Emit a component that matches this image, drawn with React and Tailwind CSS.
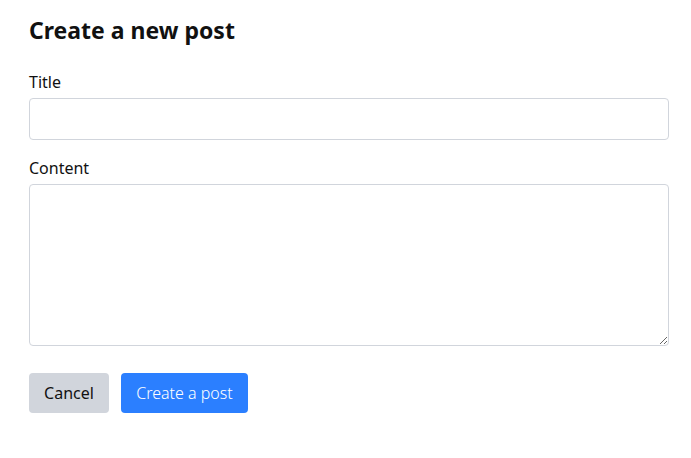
export default function App() {
  return (
    <div className="min-h-screen bg-white px-[29px] pt-[14px] font-['Noto_Sans','Open_Sans',sans-serif] text-[#111]">
      <div className="w-[640px]">
        <h1 className="text-[23px] font-bold leading-8">Create a new post</h1>

        <form className="mt-[24px] flex flex-col" onSubmit={(e) => e.preventDefault()}>
          <label htmlFor="title" className="text-base leading-6">Title</label>
          <input
            id="title"
            type="text"
            className="mt-[4px] h-[42px] w-full rounded border border-gray-300 px-3 outline-none"
          />

          <label htmlFor="content" className="mt-[16px] text-base leading-6">Content</label>
          <textarea
            id="content"
            className="mt-[4px] h-[162px] w-full rounded border border-gray-300 px-3 py-2 outline-none"
          />

          <div className="mt-[27px] flex gap-3">
            <button type="button" className="h-10 w-20 rounded bg-gray-300 text-base text-[#111]">
              Cancel
            </button>
            <button type="submit" className="h-10 w-[127px] rounded bg-blue-500 text-base font-light text-white">
              Create a post
            </button>
          </div>
        </form>
      </div>
    </div>
  );
}
